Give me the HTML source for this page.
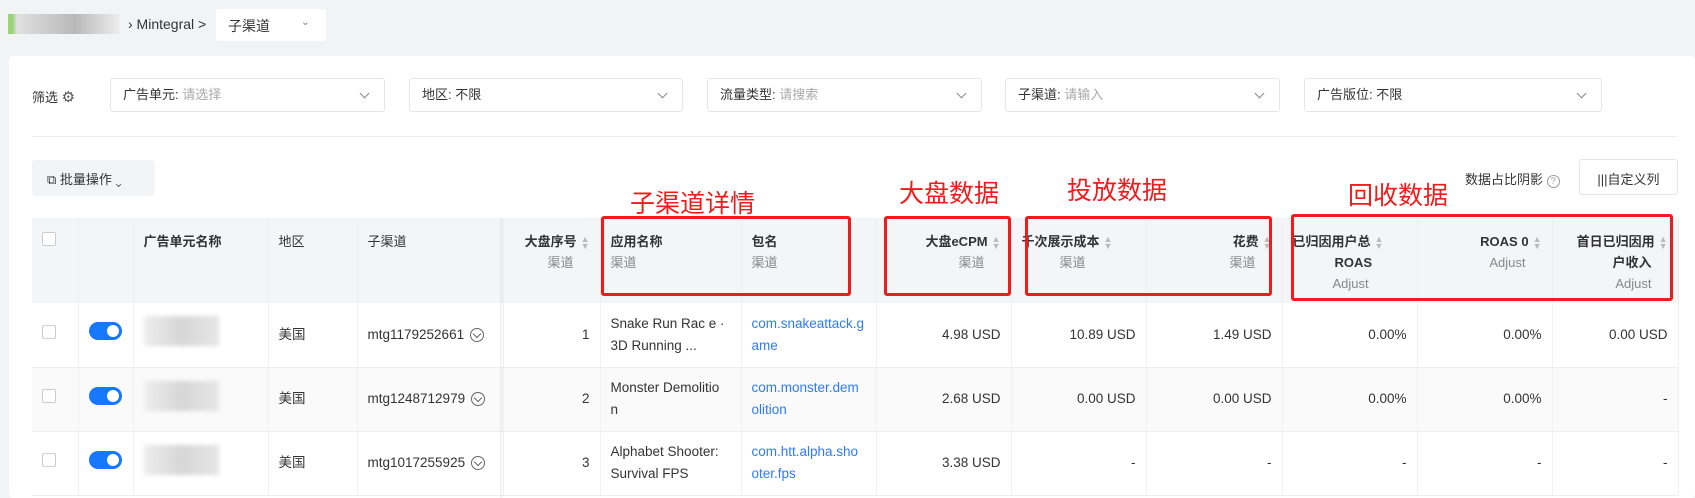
<!DOCTYPE html>
<html><head><meta charset="utf-8"><style>
*{box-sizing:border-box;margin:0;padding:0}
body{width:1695px;height:498px;overflow:hidden;background:#f2f3f5;font-family:"Liberation Sans","Noto Sans CJK SC",sans-serif;font-size:13px;color:#333;position:relative}
.abs{position:absolute}
.card{left:9px;top:56px;width:1686px;height:442px;background:#fff;border-radius:4px}
.sel{top:78px;height:34px;border:1px solid #e4e6eb;border-radius:3px;background:#fff;padding:0 12px;line-height:32px;font-size:13px}
.sel .ph{color:#aaa}
.sel:after{content:"";position:absolute;right:16px;top:11px;width:6px;height:6px;border-right:1px solid #888;border-bottom:1px solid #888;transform:rotate(45deg)}
table{position:absolute;left:32px;top:218px;border-collapse:collapse;table-layout:fixed;font-size:13.5px;width:1646px}
th{background:#f4f5f7;height:85px;vertical-align:top;padding:13px 10px 0;font-weight:bold;color:#333;text-align:left;border-right:1px solid #eceef1;line-height:21px;font-size:13px}
th .s{font-weight:normal;color:#888}
th.r{text-align:right}
td{height:64px;border-bottom:1px solid #eceef1;border-right:1px solid #f0f1f3;padding:0 10px;line-height:22px;word-break:break-all;overflow:hidden}
td.r{text-align:right}
tr.g td{background:#fafafa}
a{color:#2f7bf5;text-decoration:none}
.cb{width:14px;height:14px;border:1px solid #ccc;border-radius:2px;background:#fff;display:inline-block}
.tg{width:33px;height:18px;border-radius:9px;background:#1677ff;position:relative;display:inline-block}
.tg:after{content:"";position:absolute;right:3px;top:3px;width:12px;height:12px;border-radius:50%;background:#fff}
.blur{display:inline-block;width:75px;height:30px;background:linear-gradient(90deg,#eee,#d6d6d6,#e6e6e6);filter:blur(2px)}
.red{color:#f01b1b;font-size:25px}
.box{border:3px solid #f01b1b;border-radius:3px}
.sort{display:inline-block;color:#bbb;font-size:9px;line-height:7px;vertical-align:middle;margin-left:4px}
.ci{display:inline-block;width:14px;height:14px;border:1px solid #666;border-radius:50%;vertical-align:middle;margin-left:6px;position:relative}
.ci:after{content:"";position:absolute;left:3px;top:2px;width:5px;height:5px;border-right:1px solid #666;border-bottom:1px solid #666;transform:rotate(45deg)}
</style></head><body>
<div class="abs" style="left:8px;top:14px;width:112px;height:20px;background:linear-gradient(90deg,#9bd27a 0 4%,#e0e0e0 8%,#c8c8c8 40%,#b8b8b8 60%,#eee)"></div>
<div class="abs" style="left:128px;top:16px;font-size:14px">› Mintegral &gt;</div>
<div class="abs" style="left:216px;top:9px;width:110px;height:32px;background:#fff;border-radius:3px;padding:7px 12px;font-size:14px">子渠道<span style="position:absolute;right:16px;top:6px;color:#888;font-size:11px">⌄</span></div>
<div class="abs card"></div>
<div class="abs" style="left:32px;top:87px;font-size:13px">筛选 <span style="font-size:15px;color:#555">⚙</span></div>
<div class="abs sel" style="left:110px;width:275px">广告单元: <span class="ph">请选择</span></div>
<div class="abs sel" style="left:409px;width:274px">地区: 不限</div>
<div class="abs sel" style="left:707px;width:275px">流量类型: <span class="ph">请搜索</span></div>
<div class="abs sel" style="left:1005px;width:275px">子渠道: <span class="ph">请输入</span></div>
<div class="abs sel" style="left:1304px;width:298px">广告版位: 不限</div>
<div class="abs" style="left:32px;top:136px;width:1646px;height:1px;background:#eceef1"></div>
<div class="abs" style="left:32px;top:160px;width:123px;height:36px;background:#f3f4f6;border-radius:4px;padding:9px 15px;font-size:13px">⧉ 批量操作 ⌄</div>
<div class="abs" style="left:1465px;top:169px;font-size:13px">数据占比阴影 <span style="display:inline-block;width:13px;height:13px;border:1px solid #999;border-radius:50%;font-size:9px;text-align:center;line-height:11px;color:#999">?</span></div>
<div class="abs" style="left:1579px;top:159px;width:99px;height:36px;border:1px solid #e4e6eb;border-radius:3px;padding:9px 0;text-align:center;font-size:13px">|||自定义列</div>
<table>
<colgroup><col style="width:46px"><col style="width:55px"><col style="width:135px"><col style="width:89px"><col style="width:146px"><col style="width:97px"><col style="width:141px"><col style="width:135px"><col style="width:135px"><col style="width:135px"><col style="width:136px"><col style="width:135px"><col style="width:135px"><col style="width:126px"></colgroup>
<tr><th><span class="cb"></span></th><th></th><th>广告单元名称</th><th style="font-weight:normal">地区</th><th style="font-weight:normal">子渠道</th><th class="r">大盘序号<span class="sort">▲<br>▼</span><br><span class="s" style="margin-right:16px">渠道</span></th><th>应用名称<br><span class="s">渠道</span></th><th>包名<br><span class="s">渠道</span></th><th class="r">大盘eCPM<span class="sort">▲<br>▼</span><br><span class="s" style="margin-right:16px">渠道</span></th><th>千次展示成本<span class="sort">▲<br>▼</span><br><span class="s" style="margin-left:38px">渠道</span></th><th class="r">花费<span class="sort">▲<br>▼</span><br><span class="s" style="margin-right:16px">渠道</span></th><th>已归因用户总<span class="sort">▲<br>▼</span><br><span style="margin-left:42px">ROAS</span><br><span class="s" style="margin-left:40px">Adjust</span></th><th class="r">ROAS 0<span class="sort">▲<br>▼</span><br><span class="s" style="margin-right:16px">Adjust</span></th><th class="r">首日已归因用<span class="sort">▲<br>▼</span><br><span style="margin-right:16px">户收入</span><br><span class="s" style="margin-right:16px">Adjust</span></th></tr>
<tr><td><span class="cb"></span></td><td><span class="tg"></span></td><td><span class="blur"></span></td><td>美国</td><td>mtg1179252661<span class="ci"></span></td><td class="r">1</td><td>Snake Run Rac e · 3D Running ...</td><td><a>com.snakeattack.game</a></td><td class="r">4.98 USD</td><td class="r">10.89 USD</td><td class="r">1.49 USD</td><td class="r">0.00%</td><td class="r">0.00%</td><td class="r">0.00 USD</td></tr>
<tr class="g"><td><span class="cb"></span></td><td><span class="tg"></span></td><td><span class="blur"></span></td><td>美国</td><td>mtg1248712979<span class="ci"></span></td><td class="r">2</td><td>Monster Demolitio n</td><td><a>com.monster.demolition</a></td><td class="r">2.68 USD</td><td class="r">0.00 USD</td><td class="r">0.00 USD</td><td class="r">0.00%</td><td class="r">0.00%</td><td class="r">-</td></tr>
<tr><td><span class="cb"></span></td><td><span class="tg"></span></td><td><span class="blur"></span></td><td>美国</td><td>mtg1017255925<span class="ci"></span></td><td class="r">3</td><td>Alphabet Shooter: Survival FPS</td><td><a>com.htt.alpha.shooter.fps</a></td><td class="r">3.38 USD</td><td class="r">-</td><td class="r">-</td><td class="r">-</td><td class="r">-</td><td class="r">-</td></tr>
</table>
<div class="abs" style="left:500px;top:218px;width:4px;height:280px;background:linear-gradient(90deg,rgba(0,0,0,.06),transparent)"></div>
<div class="abs red" style="left:630px;top:184px">子渠道详情</div>
<div class="abs red" style="left:899px;top:174px">大盘数据</div>
<div class="abs red" style="left:1067px;top:171px">投放数据</div>
<div class="abs red" style="left:1348px;top:176px">回收数据</div>
<div class="abs box" style="left:601px;top:216px;width:250px;height:80px"></div>
<div class="abs box" style="left:884px;top:216px;width:127px;height:80px"></div>
<div class="abs box" style="left:1025px;top:216px;width:247px;height:80px"></div>
<div class="abs box" style="left:1291px;top:214px;width:382px;height:87px"></div>
</body></html>
